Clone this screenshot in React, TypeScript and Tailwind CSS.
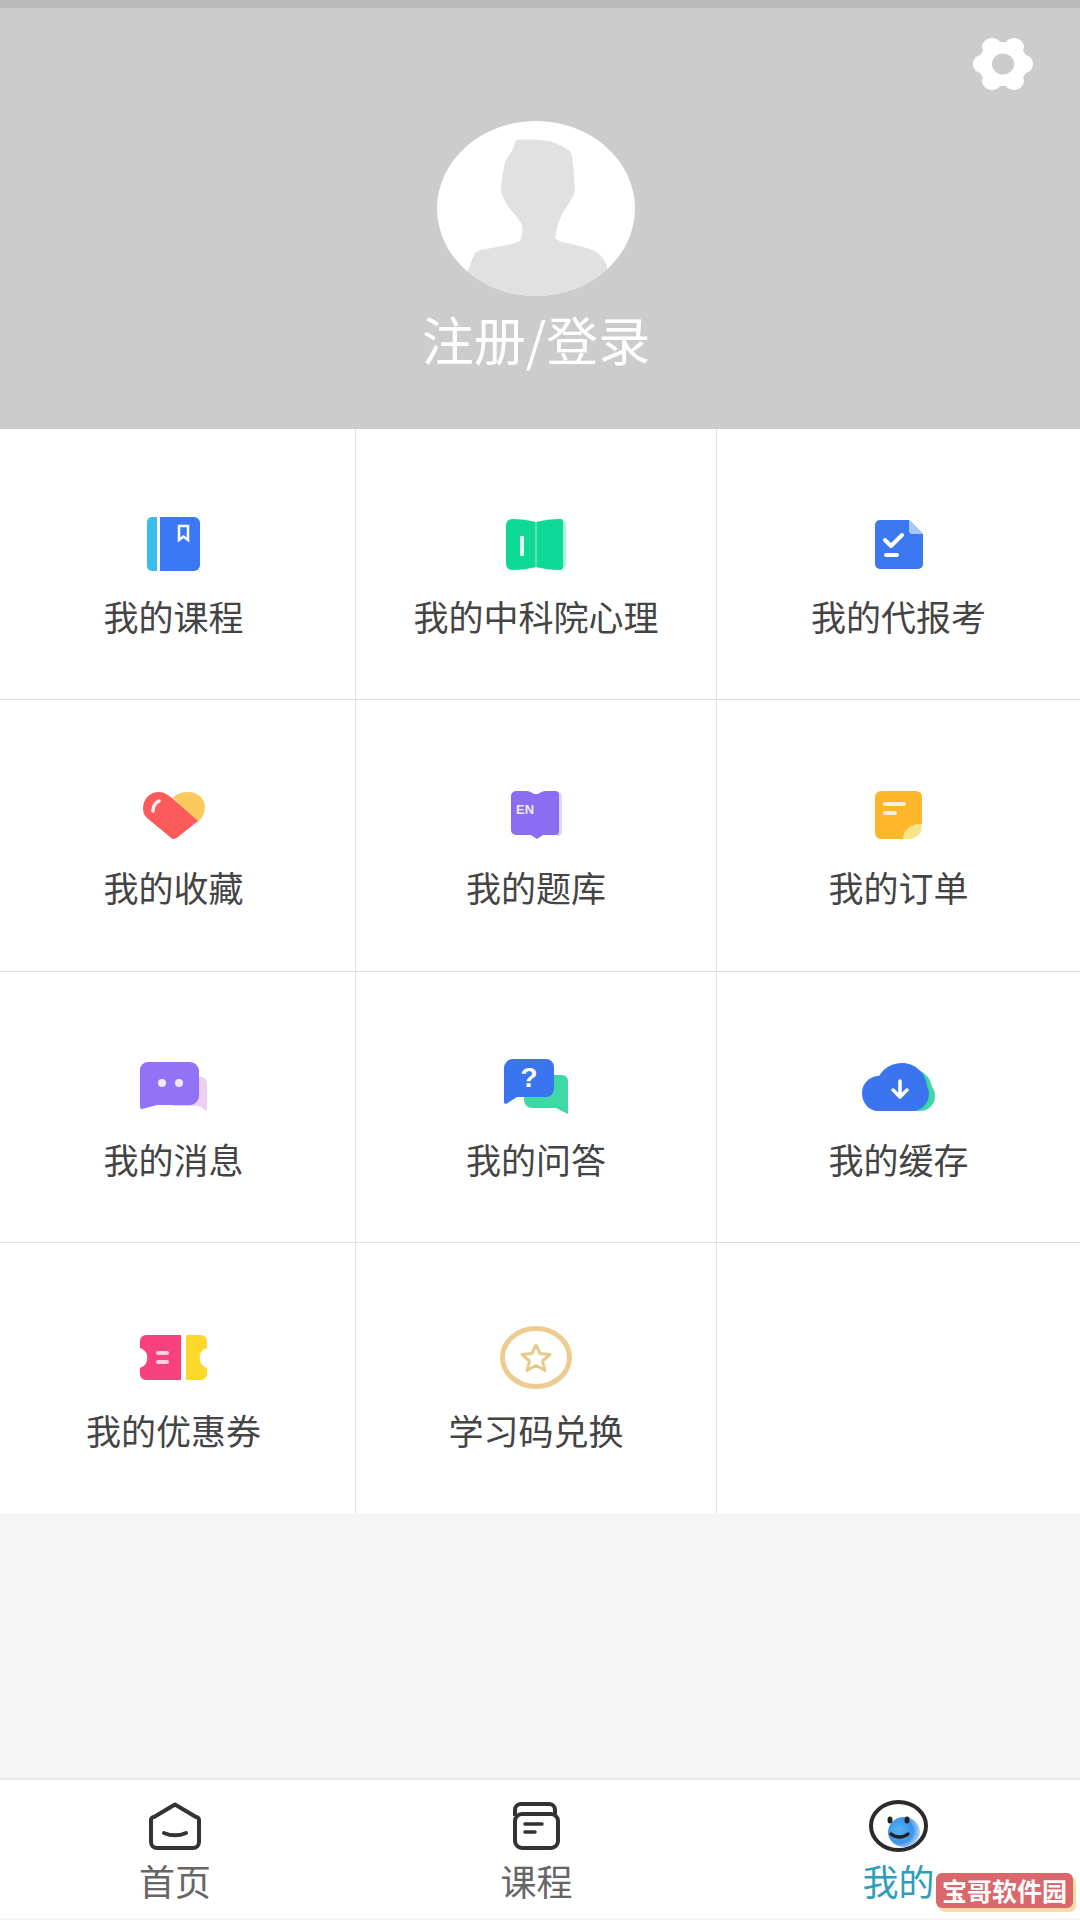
const cjk = "font-['Noto_Sans_CJK_SC','Noto_Sans',sans-serif]";

function BookIcon() {
  return (
    <svg width="53" height="54" viewBox="0 0 53 54">
      <path d="M10 0v54H5a5 5 0 0 1-5-5V5a5 5 0 0 1 5-5z" fill="#38bdec" />
      <path d="M13 0h34a6 6 0 0 1 6 6v42a6 6 0 0 1-6 6H13z" fill="#3b78f5" />
      <path d="M32 9h9v14l-4.500-3.500L32 23z" fill="none" stroke="#fff" strokeWidth="2.500" />
    </svg>
  );
}

function OpenBookIcon() {
  return (
    <svg width="60" height="51" viewBox="0 0 60 51">
      <path d="M52 0h4l4 4v43l-4 3h-4z" fill="#a8f2d6" />
      <path d="M6 0c9 0 16 1 24 3v45c-8 2-15 3-24 3a6 6 0 0 1-6-6V6a6 6 0 0 1 6-6z" fill="#0ed996" />
      <path d="M54 0c-9 0-16 1-24 3v45c8 2 15 3 24 3a3 3 0 0 0 3-3V3a3 3 0 0 0-3-3z" fill="#0ed996" />
      <rect x="29" y="3" width="2" height="45" fill="#fff" opacity="0.3" />
      <rect x="14" y="17" width="4" height="20" rx="1" fill="#fff" opacity="0.9" />
    </svg>
  );
}

function DocIcon() {
  return (
    <svg width="48" height="49" viewBox="0 0 48 49">
      <path d="M5 0h29l14 14v30a5 5 0 0 1-5 5H5a5 5 0 0 1-5-5V5a5 5 0 0 1 5-5z" fill="#3b78f0" />
      <path d="M34 0l14 14H37a3 3 0 0 1-3-3z" fill="#a7c7fa" />
      <path d="M10 20l6 6 11-11" fill="none" stroke="#fff" strokeWidth="4" strokeLinecap="round" strokeLinejoin="round" />
      <rect x="9" y="33" width="15" height="4" rx="2" fill="#fff" />
    </svg>
  );
}

function HeartIcon() {
  return (
    <svg width="62" height="47" viewBox="0 0 62 47">
      <path d="M30 6C34 1 40 0 46 0c9 0 16 7 16 15 0 5-2 9-5 13l-3 3z" fill="#fbc95c" />
      <path d="M0 16C0 6 8 0 16 0c5 0 9 3 13 6l26 23-20 16c-3 2.500-6 2.500-8 0L4 26C1 23 0 20 0 16z" fill="#fb5b5b" />
      <path d="M10 19c0-4 2-8 6-10" fill="none" stroke="#fff" strokeWidth="3.500" strokeLinecap="round" opacity="0.9" />
    </svg>
  );
}

function EnBookIcon() {
  return (
    <svg width="51" height="48" viewBox="0 0 51 48">
      <path d="M46 1h1a4 4 0 0 1 4 4v36a4 4 0 0 1-4 4h-1z" fill="#e6d6fb" />
      <path d="M5 0h10c3 0 5 1 8 3h4c3-2 5-3 8-3h9a4 4 0 0 1 4 4v37a3 3 0 0 1-3 3H32l-6 4-6-4H5a5 5 0 0 1-5-5V5a5 5 0 0 1 5-5z" fill="#8a6df0" />
      <text x="5" y="23" fontSize="13" fontWeight="700" fill="#efe9ff" fontFamily="Liberation Sans, sans-serif">EN</text>
    </svg>
  );
}

function NoteIcon() {
  return (
    <svg width="47" height="48" viewBox="0 0 47 48">
      <path d="M6 0h35a6 6 0 0 1 6 6v27L31 48H6a6 6 0 0 1-6-6V6a6 6 0 0 1 6-6z" fill="#fdb52a" />
      <path d="M47 33v3c0 7-6 12-14 12h-5c0-9 8-16 19-15z" fill="#f6e58d" />
      <rect x="8" y="11" width="23" height="4" rx="2" fill="#fff" opacity="0.8" />
      <rect x="8" y="20" width="14" height="4" rx="2" fill="#fff" opacity="0.8" />
    </svg>
  );
}

function MessageIcon() {
  return (
    <svg width="67" height="49" viewBox="0 0 67 49">
      <path d="M25 15h36a6 6 0 0 1 6 6v28l-8-5H33l-5-4-8 0V20z" fill="#eccff3" />
      <path d="M8 0h42a9 9 0 0 1 9 9v25a9 9 0 0 1-9 9H17L2 47c-1 0-2-1-2-2V8a8 8 0 0 1 8-8z" fill="#9273f6" />
      <ellipse cx="22" cy="21" rx="4" ry="4" fill="#f3e9ff" />
      <ellipse cx="39" cy="21" rx="4" ry="4" fill="#f3e9ff" />
    </svg>
  );
}

function QaIcon() {
  return (
    <svg width="64" height="55" viewBox="0 0 64 55">
      <path d="M26 16h32a6 6 0 0 1 6 6v33l-12-6H28a8 8 0 0 1-8-8V22z" fill="#3ed8a4" />
      <path d="M9 0h33a8 8 0 0 1 8 8v22a8 8 0 0 1-8 8H13L2 45c-1 0-2-1-2-2V9a9 9 0 0 1 9-9z" fill="#3a75ef" />
      <text x="25" y="28" textAnchor="middle" fontSize="28" fontWeight="700" fill="#fff" fontFamily="Liberation Sans, sans-serif">?</text>
    </svg>
  );
}

function CloudIcon() {
  return (
    <svg width="73" height="48" viewBox="0 0 73 48">
      <path d="M50 6c11 0 19 9 20 18 2 2 3 6 3 9 0 8-6 15-15 15H40z" fill="#3ed8a4" />
      <path d="M16 48C7 48 0 40 0 30c0-9 7-17 17-17C22 5 30 0 40 0c13 0 24 10 25 23 1 2 2 5 2 8 0 9-7 17-17 17z" fill="#3a75ef" />
      <path d="M38 18v14M31 27l7 7 7-7" fill="none" stroke="#fff" strokeWidth="3.500" strokeLinecap="round" strokeLinejoin="round" />
    </svg>
  );
}

function TicketIcon() {
  return (
    <svg width="67" height="45" viewBox="0 0 67 45">
      <path d="M6 0h35v45H6a6 6 0 0 1-6-6v-6a10.500 10.500 0 0 0 0-20V6a6 6 0 0 1 6-6z" fill="#f7417f" />
      <path d="M46 0h15a6 6 0 0 1 6 6v7a10.500 10.500 0 0 0 0 20v6a6 6 0 0 1-6 6H46z" fill="#fdd82a" />
      <rect x="16" y="16" width="13" height="4" rx="2" fill="#ffd0e0" />
      <rect x="16" y="25" width="13" height="4" rx="2" fill="#ffd0e0" />
    </svg>
  );
}

function StarCircleIcon() {
  return (
    <svg width="72" height="63" viewBox="0 0 72 63">
      <ellipse cx="36" cy="31.500" rx="33.500" ry="29" fill="#fff" stroke="#eccd8f" strokeWidth="5" />
      <path d="M36 19l4 8.500 10 1-7.500 6.500 2.500 9.500-9-5-9 5 2.500-9.500L22 28.500l10-1z" fill="none" stroke="#e6cb8f" strokeWidth="3" strokeLinejoin="round" />
    </svg>
  );
}

function GearIcon() {
  // six round lobes on a big disc, slightly wider than tall like the picture
  return (
    <svg width="60" height="52" viewBox="0 0 60 52">
      <ellipse cx="30" cy="26" rx="25" ry="22" fill="#fff" />
      <ellipse cx="8" cy="26" rx="8" ry="9" fill="#fff" />
      <ellipse cx="52" cy="26" rx="8" ry="9" fill="#fff" />
      <ellipse cx="19" cy="9" rx="10" ry="9" fill="#fff" />
      <ellipse cx="41" cy="9" rx="10" ry="9" fill="#fff" />
      <ellipse cx="19" cy="43" rx="10" ry="9" fill="#fff" />
      <ellipse cx="41" cy="43" rx="10" ry="9" fill="#fff" />
      <ellipse cx="30" cy="26" rx="11" ry="10.500" fill="#cccccc" />
    </svg>
  );
}

function Avatar() {
  return (
    <svg width="198" height="175" viewBox="0 0 198 175">
      <ellipse cx="99" cy="87.500" rx="99" ry="87.500" fill="#fff" />
      <clipPath id="avatar-clip">
        <ellipse cx="99" cy="87.500" rx="99" ry="87.500" />
      </clipPath>
      <path
        clipPath="url(#avatar-clip)"
        fill="#e1e1e1"
        d="M79 19c12-1 22 0 34 1 10 4 18 7 21 12 3 10 3 24 4 36 0 10-12 20-15 30-3 6-4 13-5 19 3 3 10 5 16 6 14 3 26 6 31 13 3 4 4 8 5 9v40H30v-30c1-6 4-15 8-23 5-4 11-4 17-5 10-2 22-4 28-7 2-5 3-10 2-15-2-8-12-15-16-23-3-5-5-10-5-14 0-9 2-18 4-26 2-5 5-9 8-14 1-4 2-7 3-9z"
      />
    </svg>
  );
}

function HomeTab() {
  return (
    <svg width="52" height="48" viewBox="0 0 52 48">
      <path d="M26 2.500L47 15a3 3 0 0 1 3 3v22a6 6 0 0 1-6 6H8a6 6 0 0 1-6-6V18a3 3 0 0 1 3-3z" fill="none" stroke="#333" strokeWidth="4" strokeLinejoin="round" />
      <path d="M15 31c7 3 15 3 22 0" fill="none" stroke="#333" strokeWidth="4" strokeLinecap="round" />
    </svg>
  );
}

function CourseTab() {
  return (
    <svg width="47" height="48" viewBox="0 0 47 48">
      <path d="M2 14V8a6 6 0 0 1 6-6h28a6 6 0 0 1 6 6v4" fill="none" stroke="#333" strokeWidth="4" />
      <rect x="2" y="12" width="43" height="34" rx="7" fill="#fff" stroke="#333" strokeWidth="4" />
      <path d="M12 22h17M12 30h10" fill="none" stroke="#333" strokeWidth="3.500" strokeLinecap="round" />
    </svg>
  );
}

function FaceTab() {
  return (
    <svg width="59" height="52" viewBox="0 0 59 52">
      <defs>
        <radialGradient id="face-fill" cx="0.35" cy="0.45" r="0.7">
          <stop offset="0" stopColor="#58b4f2" />
          <stop offset="0.6" stopColor="#3d92ea" />
          <stop offset="1" stopColor="#cfe6fb" />
        </radialGradient>
      </defs>
      <ellipse cx="29.500" cy="26" rx="27.500" ry="24" fill="#fff" stroke="#2b2b2b" strokeWidth="4" />
      <ellipse cx="35" cy="32" rx="16" ry="15" fill="url(#face-fill)" />
      <ellipse cx="21" cy="20" rx="2.500" ry="3.500" fill="#222" />
      <ellipse cx="38" cy="20" rx="2.500" ry="3.500" fill="#222" />
      <path d="M22 34c5 4 12 4 17 0" fill="none" stroke="#222" strokeWidth="3.500" strokeLinecap="round" />
    </svg>
  );
}

const items = [
  { label: "我的课程", icon: <BookIcon /> },
  { label: "我的中科院心理", icon: <OpenBookIcon /> },
  { label: "我的代报考", icon: <DocIcon /> },
  { label: "我的收藏", icon: <HeartIcon /> },
  { label: "我的题库", icon: <EnBookIcon /> },
  { label: "我的订单", icon: <NoteIcon /> },
  { label: "我的消息", icon: <MessageIcon /> },
  { label: "我的问答", icon: <QaIcon /> },
  { label: "我的缓存", icon: <CloudIcon /> },
  { label: "我的优惠券", icon: <TicketIcon /> },
  { label: "学习码兑换", icon: <StarCircleIcon /> },
  { label: "", icon: null },
];

const tabs = [
  { label: "首页", icon: <HomeTab />, color: "text-[#666666]" },
  { label: "课程", icon: <CourseTab />, color: "text-[#666666]" },
  { label: "我的", icon: <FaceTab />, color: "text-[#2e9dbb]" },
];

export default function App() {
  return (
    <div className={`relative w-[1080px] h-[1920px] flex flex-col bg-[#f5f5f5] overflow-hidden ${cjk}`}>
      <div className="h-2 bg-[#bababa]" />
      <header className="h-[421px] bg-[#cccccc] flex flex-col items-center relative pr-2">
        <button className="absolute top-[30px] right-[47px]">
          <GearIcon />
        </button>
        <div className="mt-[113px]">
          <Avatar />
        </div>
        <div className="mt-2 text-[52px] leading-[70px] text-white">注册/登录</div>
      </header>

      <main className="grid grid-cols-[356px_361px_1fr] bg-white">
        {items.map((item, i) => (
          <div
            key={i}
            className={`h-[271.250px] flex flex-col items-center pt-[80px] ${i % 3 !== 2 ? "border-r border-[#e2e2e2]" : ""} ${i < 9 ? "border-b border-[#d9d9d9]" : ""} ${i % 3 === 0 ? "pr-2" : ""}`}
          >
            {item.icon && (
              <>
                <div className="h-[70px] flex items-center justify-center">{item.icon}</div>
                <div className="mt-[13px] text-[35px] leading-[48px] text-[#444444]">{item.label}</div>
              </>
            )}
          </div>
        ))}
      </main>

      <div className="flex-1" />

      <nav className="h-[140px] mb-[2px] grid grid-cols-[356px_361px_1fr] bg-white border-t-2 border-[#e8e8e8]">
        {tabs.map((tab, i) => (
          <div key={tab.label} className={`flex flex-col items-center ${i === 0 ? "pr-1.5" : ""}`}>
            <div className="h-[52px] mt-[20px] flex items-center justify-center">{tab.icon}</div>
            <div className={`mt-[3px] text-[36px] leading-[50px] ${tab.color}`}>{tab.label}</div>
          </div>
        ))}
      </nav>

      <div className="absolute left-[936px] top-[1873px] w-[137px] h-[35px] rounded-[6px] bg-[#d9676b] shadow-[3px_4px_0_#f7dca6] flex items-center justify-center text-[25px] font-bold text-white whitespace-nowrap">
        宝哥软件园
      </div>
    </div>
  );
}
